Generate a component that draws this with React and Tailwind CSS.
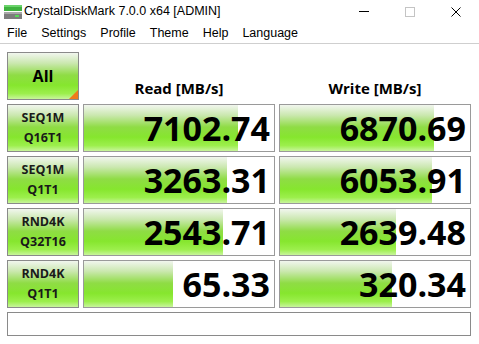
import React from 'react';

const rows = [
  { l1: 'SEQ1M', l2: 'Q16T1', read: '7102.74', rp: 81, write: '6870.69', wp: 81 },
  { l1: 'SEQ1M', l2: 'Q1T1', read: '3263.31', rp: 75, write: '6053.91', wp: 80 },
  { l1: 'RND4K', l2: 'Q32T16', read: '2543.71', rp: 73, write: '2639.48', wp: 61 },
  { l1: 'RND4K', l2: 'Q1T1', read: '65.33', rp: 47, write: '320.34', wp: 59 },
];

const green =
  'bg-[linear-gradient(180deg,#f1f6ee_0%,#cbe8b0_22%,#8fdc45_48%,#86e62e_70%,#9cef4c_88%,#c8f59c_100%)]';

const menus = ['File', 'Settings', 'Profile', 'Theme', 'Help', 'Language'];

// Drive icon in title bar
const DriveIcon = () => (
  <svg width="20" height="16" viewBox="0 0 20 16">
    <rect x="1" y="1" width="18" height="6" fill="#3fb23f" />
    <rect x="1" y="1" width="18" height="2" fill="#6bd36b" />
    <rect x="1" y="8" width="18" height="7" fill="#7d7d7d" />
    <rect x="1" y="8" width="18" height="2" fill="#a8a8a8" />
    <rect x="12" y="11" width="4" height="2" fill="#58d858" />
  </svg>
);

const ValueCell = ({ value, pct }) => (
  <div className="relative h-[48px] border border-[#9a9a9a] bg-white overflow-hidden">
    <div className={`absolute left-0 top-0 bottom-0 ${green}`} style={{ width: `${pct}%` }} />
    <div className="relative flex h-full items-center justify-end pr-[4px] font-['Open_Sans'] text-[34px] font-bold leading-none text-black">
      {value}
    </div>
  </div>
);

const LabelCell = ({ l1, l2 }) => (
  <div
    className={`flex h-[48px] flex-col items-center justify-center border border-[#8a8a8a] ${green} font-['Open_Sans'] text-[12.5px] font-bold leading-[20px] text-[#1a1a1a]`}
  >
    <span>{l1}</span>
    <span>{l2}</span>
  </div>
);

export default function App() {
  return (
    <div className="h-[344px] w-[479px] overflow-hidden bg-white">
      {/* Title bar */}
      <div className="flex h-[23px] items-center">
        <div className="ml-[3px] mt-[1px]">
          <DriveIcon />
        </div>
        <span className="ml-[1px] font-['Liberation_Sans'] text-[12.5px] text-black">
          CrystalDiskMark 7.0.0 x64 [ADMIN]
        </span>
        <div className="ml-auto flex h-full items-center">
          <div className="flex w-[46px] items-center justify-center">
            <div className="h-px w-[10px] bg-black" />
          </div>
          <div className="flex w-[46px] items-center justify-center">
            <div className="h-[10px] w-[10px] border border-[#c4c4c4]" />
          </div>
          <div className="flex w-[46px] items-center justify-center">
            <svg width="10" height="10" viewBox="0 0 10 10">
              <path d="M0.5 0.5L9.5 9.5M9.5 0.5L0.5 9.5" stroke="#000" strokeWidth="1" />
            </svg>
          </div>
        </div>
      </div>

      {/* Menu bar */}
      <div className="flex h-[21px] items-center border-b border-[#cfcfcf] pl-[7px] font-['Liberation_Sans'] text-[12.5px] text-black">
        {menus.map((m) => (
          <span key={m} className="mr-[14px]">
            {m}
          </span>
        ))}
      </div>

      {/* Main grid */}
      <div className="px-[7px] pt-[8px]">
        <div className="grid grid-cols-[72px_192px_192px] gap-[4px]">
          <div
            className={`relative flex h-[48px] items-center justify-center border border-[#8a8a8a] ${green} font-['Open_Sans'] text-[16px] font-bold text-black`}
          >
            All
            <svg className="absolute bottom-0 right-0" width="9" height="9" viewBox="0 0 9 9">
              <polygon points="9,0 9,9 0,9" fill="#f07a1a" />
            </svg>
          </div>
          <div className="flex h-[48px] items-end justify-center pb-[1px] font-['Open_Sans'] text-[15px] font-bold text-black">
            Read [MB/s]
          </div>
          <div className="flex h-[48px] items-end justify-center pb-[1px] font-['Open_Sans'] text-[15px] font-bold text-black">
            Write [MB/s]
          </div>

          {rows.map((r) => (
            <React.Fragment key={r.l1 + r.l2}>
              <LabelCell l1={r.l1} l2={r.l2} />
              <ValueCell value={r.read} pct={r.rp} />
              <ValueCell value={r.write} pct={r.wp} />
            </React.Fragment>
          ))}
        </div>

        {/* Status bar */}
        <div className="mt-[4px] h-[24px] w-[464px] border border-[#8a8a8a] bg-white" />
      </div>
    </div>
  );
}
